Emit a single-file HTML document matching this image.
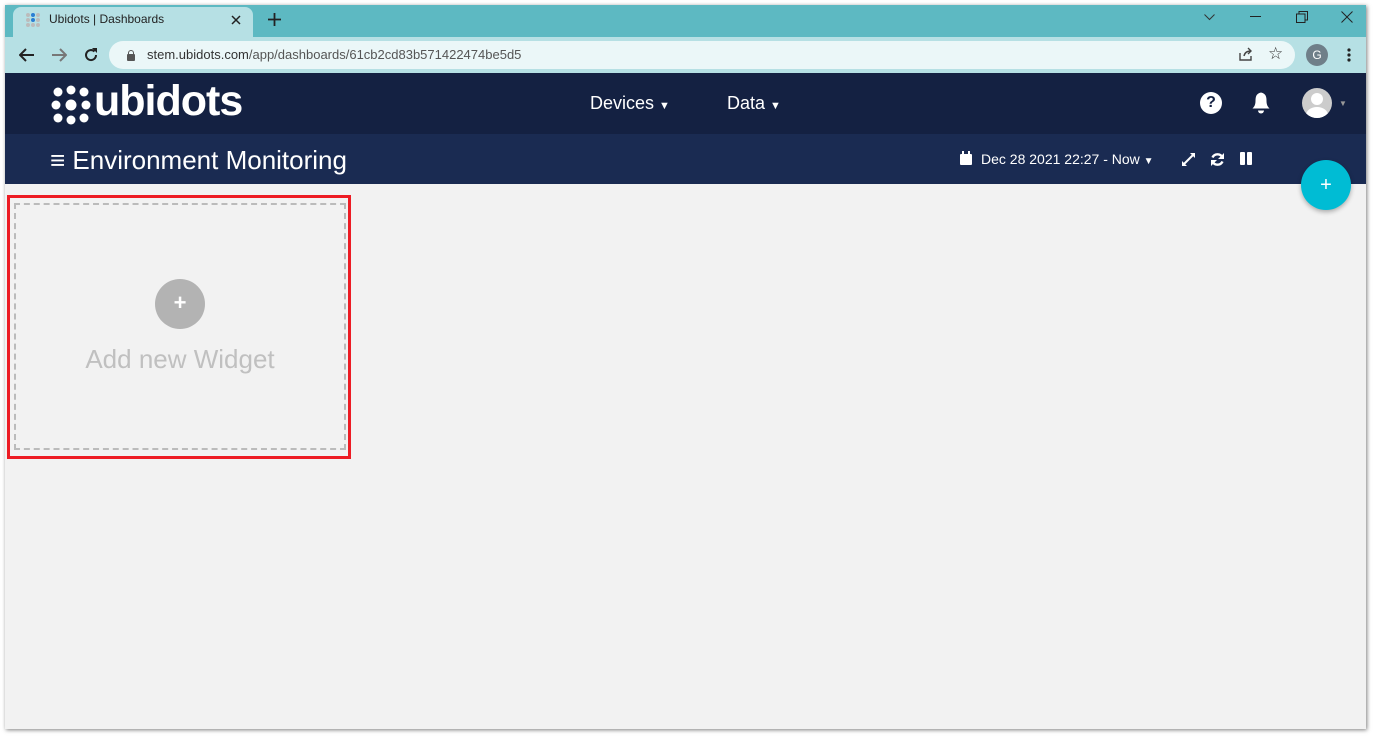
<!DOCTYPE html><html><head><style>
body{margin:0;width:1375px;height:738px;background:#fff;font-family:"Liberation Sans",sans-serif;position:relative;overflow:hidden}
.win{position:absolute;left:5px;top:5px;width:1361px;height:724px;background:#f2f2f2;box-shadow:1px 1px 4px rgba(0,0,0,.5)}
.a{position:absolute}
</style></head><body><div class="win">
<div class="a" style="left:0;top:0;width:1361px;height:32px;background:#5db9c2"></div>
<div class="a" style="left:8px;top:2px;width:240px;height:30px;background:#b6e0e4;border-radius:8px 8px 0 0"></div>
<div class="a" style="left:20px;top:7px;width:16px;height:16px">
<svg width="16" height="16"><g fill="#bbb"><circle cx="3" cy="3" r="2"/><circle cx="3" cy="8" r="2"/><circle cx="3" cy="13" r="2"/><circle cx="13" cy="3" r="2"/><circle cx="13" cy="8" r="2"/><circle cx="13" cy="13" r="2"/><circle cx="8" cy="13" r="2"/></g><g fill="#2a7fd4"><circle cx="8" cy="3" r="2"/><circle cx="8" cy="8" r="2"/></g></svg></div>
<div class="a" style="left:44px;top:7px;font-size:12px;color:#222">Ubidots | Dashboards</div>
<svg class="a" style="left:226px;top:10px" width="10" height="10"><path d="M1 1L9 9M9 1L1 9" stroke="#222" stroke-width="1.5"/></svg>
<svg class="a" style="left:263px;top:8px" width="13" height="13"><path d="M6.5 0V13M0 6.5H13" stroke="#222" stroke-width="1.8"/></svg>
<svg class="a" style="left:1199px;top:9px" width="11" height="7"><path d="M0.5 0.5L5.5 5.5L10.5 0.5" stroke="#333" fill="none"/></svg>
<div class="a" style="left:1245px;top:11px;width:11px;height:1px;background:#222"></div>
<svg class="a" style="left:1291px;top:6px" width="12" height="12"><path d="M3 3V0.5H11.5V9H9M0.5 3H9V11.5H0.5Z" stroke="#222" fill="none"/></svg>
<svg class="a" style="left:1336px;top:6px" width="12" height="12"><path d="M0.5 0.5L11.5 11.5M11.5 0.5L0.5 11.5" stroke="#222"/></svg>
<div class="a" style="left:0;top:32px;width:1361px;height:36px;background:#b6e0e4"></div>
<svg class="a" style="left:14px;top:43px" width="16" height="14"><path d="M15 7H2M7 1L1 7L7 13" stroke="#222" stroke-width="2" fill="none"/></svg>
<svg class="a" style="left:46px;top:43px" width="16" height="14"><path d="M1 7H14M9 1L15 7L9 13" stroke="#777" stroke-width="2" fill="none"/></svg>
<svg class="a" style="left:78px;top:42px" width="16" height="16"><path d="M13 8A5 5 0 1 1 11.5 4.5" stroke="#222" stroke-width="2" fill="none"/><path d="M9 1H14V6Z" fill="#222"/></svg>
<div class="a" style="left:104px;top:36px;width:1186px;height:28px;background:#ebf7f8;border-radius:14px"></div>
<div class="a" style="left:122px;top:49px;width:8px;height:7px;background:#555;border-radius:1px"></div>
<div class="a" style="left:123px;top:45px;width:4px;height:5px;border:1px solid #555;border-bottom:none;border-radius:3px 3px 0 0"></div>
<div class="a" style="left:142px;top:42px;font-size:13px;color:#333">stem.ubidots.com<span style="color:#555">/app/dashboards/61cb2cd83b571422474be5d5</span></div>
<svg class="a" style="left:1233px;top:42px" width="15" height="15"><path d="M2 6V13H13V9M6 9Q7 4 13 4M10 1L13 4L10 7" stroke="#444" stroke-width="1.4" fill="none"/></svg>
<div class="a" style="left:1263px;top:39px;font-size:17px;color:#333">☆</div>
<div class="a" style="left:1301px;top:39px;width:22px;height:22px;border-radius:50%;background:#6f7f89;color:#fff;font-size:12px;text-align:center;line-height:22px">G</div>
<svg class="a" style="left:1341px;top:43px" width="6" height="16"><circle cx="3" cy="2" r="1.6" fill="#222"/><circle cx="3" cy="7" r="1.6" fill="#222"/><circle cx="3" cy="12" r="1.6" fill="#222"/></svg>
<div class="a" style="left:0;top:68px;width:1361px;height:61px;background:#142142"></div>
<div class="a" style="left:46px;top:80px"><svg width="40" height="40"><g fill="#fff"><circle cx="7" cy="7" r="4.5"/><circle cx="20" cy="5" r="4.5"/><circle cx="33" cy="7" r="4.5"/><circle cx="5" cy="20" r="4.5"/><circle cx="20" cy="20" r="5.5"/><circle cx="35" cy="20" r="4.5"/><circle cx="7" cy="33" r="4.5"/><circle cx="20" cy="35" r="4.5"/><circle cx="33" cy="33" r="4.5"/></g></svg></div>
<div class="a" style="left:89px;top:72px;font-size:43px;font-weight:bold;color:#fff;letter-spacing:-1px">ubidots</div>
<div class="a" style="left:585px;top:88px;font-size:18px;color:#fff">Devices <span style="font-size:11px">▼</span></div>
<div class="a" style="left:722px;top:88px;font-size:18px;color:#fff">Data <span style="font-size:11px">▼</span></div>
<div class="a" style="left:1195px;top:87px;width:22px;height:22px;border-radius:50%;background:#fff;color:#142142;font-weight:bold;font-size:16px;text-align:center;line-height:22px">?</div>
<svg class="a" style="left:1246px;top:86px" width="20" height="23"><path d="M10 1.5C5 2.5 4.5 6 4.5 10C4.5 14 3 16 1.5 17.5H18.5C17 16 15.5 14 15.5 10C15.5 6 15 2.5 10 1.5Z" fill="#fff"/><path d="M7 19.5A3 3 0 0 0 13 19.5Z" fill="#fff"/></svg>
<div class="a" style="left:1297px;top:83px;width:30px;height:30px;border-radius:50%;background:#ccc;overflow:hidden"><div class="a" style="left:9px;top:5px;width:12px;height:12px;border-radius:50%;background:#fff"></div><div class="a" style="left:4px;top:19px;width:22px;height:16px;border-radius:50%;background:#fff"></div></div>
<div class="a" style="left:1334px;top:94px;font-size:8px;color:#999">▼</div>
<div class="a" style="left:0;top:129px;width:1361px;height:50px;background:#1a2b52"></div>
<div class="a" style="left:45px;top:140px;font-size:26px;color:#fff">≡ Environment Monitoring</div>
<svg class="a" style="left:955px;top:146px" width="12" height="14"><rect x="0" y="3" width="12" height="11" rx="1" fill="#fff"/><rect x="2" y="0" width="2" height="4" fill="#fff"/><rect x="8" y="0" width="2" height="4" fill="#fff"/></svg>
<div class="a" style="left:976px;top:146px;font-size:14px;color:#fff">Dec 28 2021 22:27 - Now <span style="font-size:10px">▼</span></div>
<svg class="a" style="left:1177px;top:148px" width="13" height="13"><path d="M2 11L11 2" stroke="#fff" stroke-width="2"/><path d="M0 8V13H5ZM8 0H13V5Z" fill="#fff"/></svg>
<svg class="a" style="left:1205px;top:147px" width="15" height="15"><path d="M12.5 5.5A5.5 5.5 0 0 0 2.5 5.5M2.5 9.5A5.5 5.5 0 0 0 12.5 9.5" stroke="#fff" stroke-width="2.4" fill="none"/><path d="M14 1V7H8ZM1 14V8H7Z" fill="#fff"/></svg>
<div class="a" style="left:1235px;top:147px;width:5px;height:13px;background:#fff;border-radius:1px"></div><div class="a" style="left:1242px;top:147px;width:5px;height:13px;background:#fff;border-radius:1px"></div>
<div class="a" style="left:1296px;top:155px;width:50px;height:50px;border-radius:50%;background:#00bcd4;box-shadow:0 2px 5px rgba(0,0,0,.3);color:#fff;font-size:20px;text-align:center;line-height:50px">+</div>
<div class="a" style="left:2px;top:190px;width:344px;height:264px;border:3px solid #ed1c24;box-sizing:border-box"></div>
<div class="a" style="left:9px;top:198px;width:332px;height:247px;border:2px dashed #bbb;box-sizing:border-box"></div>
<div class="a" style="left:150px;top:274px;width:50px;height:50px;border-radius:50%;background:#b3b3b3;color:#fff;font-size:22px;font-weight:bold;text-align:center;line-height:48px">+</div>
<div class="a" style="left:9px;top:339px;width:332px;text-align:center;font-size:26px;color:#c0c0c0">Add new Widget</div>
</div></body></html>
